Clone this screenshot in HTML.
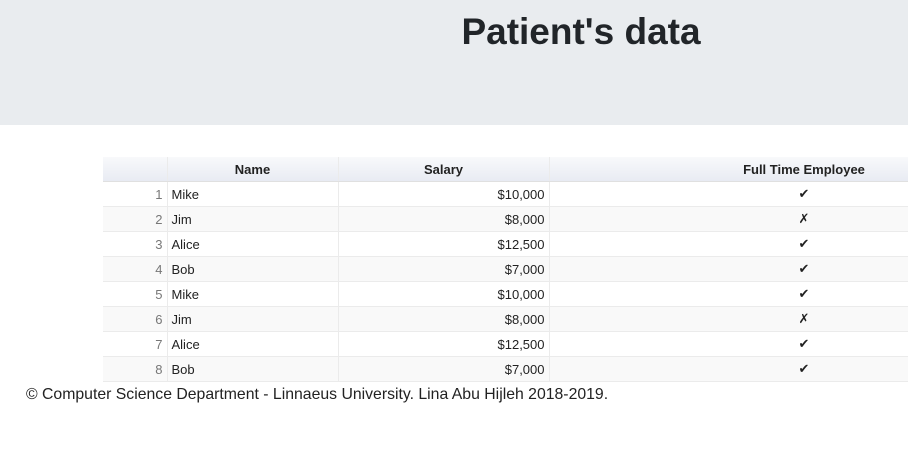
<!DOCTYPE html>
<html><head><meta charset="utf-8"><style>
html,body{margin:0;padding:0;width:908px;height:473px;overflow:hidden;background:#fff;font-family:"Liberation Sans",sans-serif;color:#212529}
.hdr{height:125px;background:#e9ecef;position:relative}
.hdr h1{position:absolute;left:0;width:1162px;top:10px;margin:0;text-align:center;font-size:37px;font-weight:bold;line-height:44px;color:#212529}
table{position:absolute;left:103px;top:157px;border-collapse:collapse;font-size:13px;color:#222;table-layout:fixed;width:956px}
td,th{height:24px;padding:0 4px;border-right:1px solid #ebebeb;border-bottom:1px solid #ebebeb;white-space:nowrap;overflow:hidden}
th{background:linear-gradient(#f8f9fb,#e8ebf3);font-weight:bold;text-align:center;border-bottom:1px solid #e0e0e0}
td.n{text-align:right;color:#777}
td.s{text-align:right}
td.f{text-align:center}
tr:nth-child(odd) td{background:#f9f9f9}
.foot{position:absolute;left:26px;top:386px;font-size:15.8px;color:#222}
</style></head><body>
<div class="hdr"><h1>Patient's data</h1></div>
<table>
<colgroup><col style="width:64px"><col style="width:171px"><col style="width:211px"><col style="width:510px"></colgroup>
<tr><th></th><th>Name</th><th>Salary</th><th>Full Time Employee</th></tr>
<tr><td class="n">1</td><td>Mike</td><td class="s">$10,000</td><td class="f">✔</td></tr>
<tr><td class="n">2</td><td>Jim</td><td class="s">$8,000</td><td class="f">✗</td></tr>
<tr><td class="n">3</td><td>Alice</td><td class="s">$12,500</td><td class="f">✔</td></tr>
<tr><td class="n">4</td><td>Bob</td><td class="s">$7,000</td><td class="f">✔</td></tr>
<tr><td class="n">5</td><td>Mike</td><td class="s">$10,000</td><td class="f">✔</td></tr>
<tr><td class="n">6</td><td>Jim</td><td class="s">$8,000</td><td class="f">✗</td></tr>
<tr><td class="n">7</td><td>Alice</td><td class="s">$12,500</td><td class="f">✔</td></tr>
<tr><td class="n">8</td><td>Bob</td><td class="s">$7,000</td><td class="f">✔</td></tr>
</table>
<div class="foot">© Computer Science Department - Linnaeus University. Lina Abu Hijleh 2018-2019.</div>
</body></html>
